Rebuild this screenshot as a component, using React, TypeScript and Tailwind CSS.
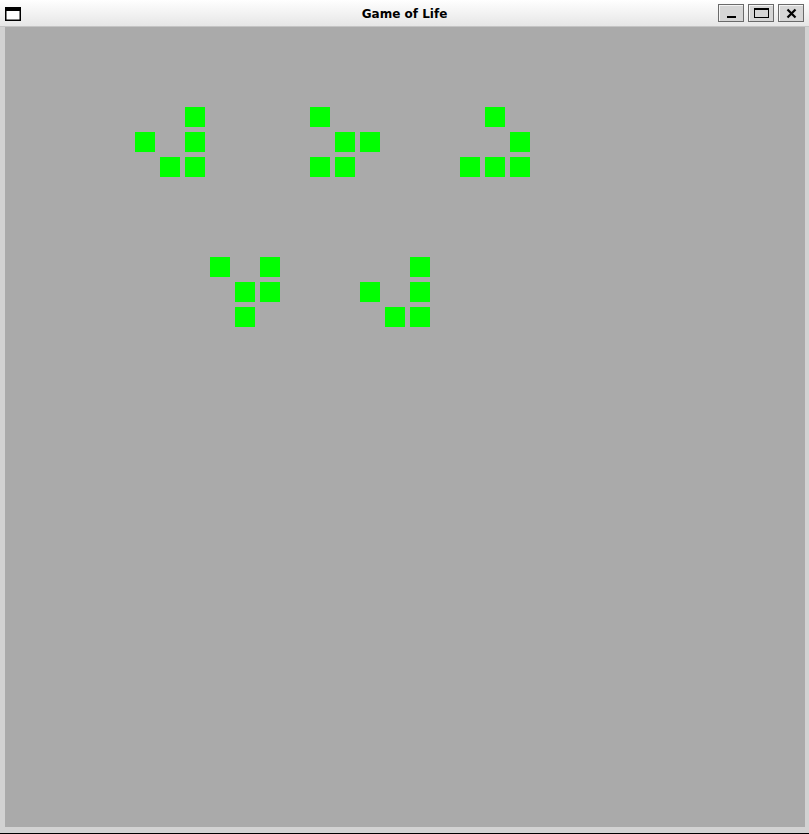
const CELLS: [number, number][] = [
  [7, 3], [5, 4], [7, 4], [6, 5], [7, 5],
  [12, 3], [13, 4], [14, 4], [12, 5], [13, 5],
  [19, 3], [20, 4], [18, 5], [19, 5], [20, 5],
  [8, 9], [10, 9], [9, 10], [10, 10], [9, 11],
  [16, 9], [14, 10], [16, 10], [15, 11], [16, 11],
];

function WinButton({ children }: { children: React.ReactNode }) {
  return (
    <button
      type="button"
      className="flex h-[18px] w-[26px] items-center justify-center border border-[#6a6a6a] bg-[#d6d6d6] shadow-[inset_1px_1px_0_#f4f4f4]"
    >
      {children}
    </button>
  );
}

export default function App() {
  return (
    <div className="flex h-[834px] w-[809px] flex-col overflow-hidden bg-[#d2d2d2]">
      {/* title bar */}
      <div className="grid h-[27px] shrink-0 grid-cols-[1fr_auto_1fr] items-center border-b border-[#c4c4c4] bg-gradient-to-b from-white to-[#e6e6e6] pl-[5px] pr-[5px]">
        <svg width="16" height="14" viewBox="0 0 16 14" className="mt-[1px]">
          <rect x="0.75" y="0.75" width="14.5" height="12.5" fill="#fff" stroke="#000" strokeWidth="1.5" />
          <rect x="0" y="0" width="16" height="4" fill="#000" />
        </svg>
        <div className="mt-[1px] text-center font-['DejaVu_Sans',sans-serif] text-[12px] font-bold text-black">
          Game of Life
        </div>
        <div className="flex justify-end gap-1">
          <WinButton>
            <span className="mt-[7px] block h-[2px] w-[9px] bg-black" />
          </WinButton>
          <WinButton>
            <span className="block h-[10px] w-[15px] border border-t-2 border-black" />
          </WinButton>
          <WinButton>
            <svg width="11" height="11" viewBox="0 0 11 11">
              <path d="M1.5 1.5 L9.5 9.5 M9.5 1.5 L1.5 9.5" stroke="#000" strokeWidth="2.2" />
            </svg>
          </WinButton>
        </div>
      </div>

      {/* canvas */}
      <div className="flex pl-[5px]">
        <div className="grid h-[800px] w-[800px] grid-cols-[repeat(32,20px)] grid-rows-[repeat(32,20px)] gap-[5px] bg-[#aaaaaa] p-[5px]">
          {CELLS.map(([c, r]) => (
            <div
              key={`${c}-${r}`}
              className="bg-[#00ff00]"
              style={{ gridColumnStart: c + 1, gridRowStart: r + 1 }}
            />
          ))}
        </div>
      </div>
      <div className="mt-auto h-px bg-black" />
    </div>
  );
}
